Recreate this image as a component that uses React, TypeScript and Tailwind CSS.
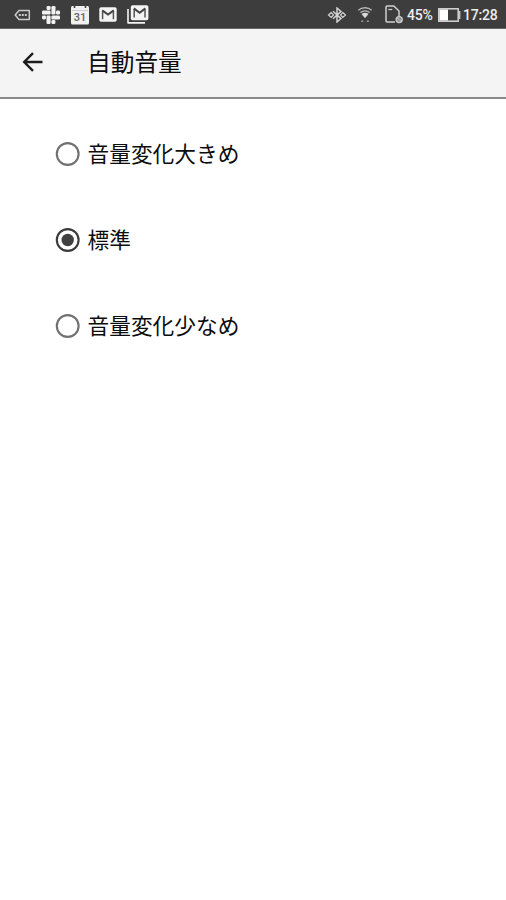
import { useState } from 'react';

const OPTIONS = [
  { id: 'large', label: '音量変化大きめ' },
  { id: 'standard', label: '標準' },
  { id: 'small', label: '音量変化少なめ' },
];

function MessageIcon() {
  return (
    <svg className="ml-[14px] h-3 w-[17px]" viewBox="0 0 17 12" fill="none" stroke="#c9c9c9" strokeWidth="1.5">
      <path d="M5 1.5h10.3v9H5L1.2 6z" strokeLinejoin="round" />
      <path d="M4.8 6h2M7.8 6h2M10.8 6h2" strokeWidth="2.2" />
    </svg>
  );
}

function SlackIcon() {
  return (
    <svg className="ml-[11px] h-[18px] w-[18px]" viewBox="0 0 18 18" fill="#f2f2f2">
      <rect x="4.6" y="0" width="4" height="4" rx="1.3" />
      <rect x="0" y="4.5" width="8.6" height="4.1" rx="1.3" />
      <rect x="9.4" y="0" width="4.1" height="8.6" rx="1.3" />
      <rect x="14" y="4.6" width="4" height="4" rx="1.3" />
      <rect x="9.4" y="9.4" width="8.6" height="4.1" rx="1.3" />
      <rect x="9.4" y="14" width="4" height="4" rx="1.3" />
      <rect x="4.5" y="9.4" width="4.1" height="8.6" rx="1.3" />
      <rect x="0" y="9.4" width="4" height="4" rx="1.3" />
    </svg>
  );
}

function CalendarIcon() {
  return (
    <svg className="ml-[11px] h-5 w-[18px]" viewBox="0 0 18 20">
      <rect x="0" y="1" width="18" height="18.5" rx="1.5" fill="#f1f1f1" />
      <path d="M3.5 0v3M14.5 0v3" stroke="#3d3d3d" strokeWidth="1.6" />
      <path d="M1 5.5h16" stroke="#c4c4c4" strokeWidth=".8" />
      <text x="9" y="15.7" textAnchor="middle" fontSize="11" fontWeight="500" fill="#666" fontFamily="Roboto, sans-serif">31</text>
    </svg>
  );
}

function MailIcon() {
  return (
    <svg className="ml-[10px] h-[15px] w-[18px]" viewBox="0 0 18 15">
      <rect x=".3" y=".3" width="17.4" height="14.4" rx="1.8" fill="#f4f4f4" />
      <path d="M3.6 12.2V4M14.4 12.2V4" stroke="#555" strokeWidth="1.5" />
      <path d="M3.2 3.4L9 7.6l5.8-4.2" fill="none" stroke="#444" strokeWidth="2" />
    </svg>
  );
}

function MailStackIcon() {
  return (
    <svg className="ml-[10px] h-[19px] w-[22px]" viewBox="0 0 22 19">
      <path d="M1 4v13.9h17" fill="none" stroke="#f4f4f4" strokeWidth="1.6" strokeLinejoin="round" />
      <rect x="3.8" y=".3" width="17.6" height="15" rx="1.8" fill="#f4f4f4" />
      <path d="M7.2 12.6V4M18 12.6V4" stroke="#555" strokeWidth="1.5" />
      <path d="M6.8 3.4l5.8 4.4 5.8-4.4" fill="none" stroke="#444" strokeWidth="2" />
    </svg>
  );
}

function BluetoothIcon() {
  return (
    <svg className="h-4 w-5" viewBox="0 0 20 16" fill="none" stroke="#d2d2d2" strokeWidth="1.5">
      <path d="M6 4.2l8 7.4-4 3.4V1l4 3.4-8 7.4" />
      <path d="M4.2 5.5L1.5 8l2.7 2.5L6.5 8zM15.8 5.5L18.5 8l-2.7 2.5L13.5 8z" strokeWidth="1.2" />
    </svg>
  );
}

function WifiIcon() {
  return (
    <svg className="ml-[10px] h-[17px] w-4" viewBox="0 0 16 17" fill="none" stroke="#b8b8b8" strokeWidth="1.3">
      <path d="M1.3 4.2C5 .9 11 .9 14.7 4.2M3.4 6.5c2.6-2.3 6.6-2.3 9.2 0" />
      <path d="M4.5 8.1c2-1.7 5-1.7 7 0L8 12.3z" fill="#d8d8d8" stroke="none" />
      <path d="M4.3 15.2h2M9.8 15.2h2" stroke="#999" strokeWidth="1.6" />
    </svg>
  );
}

function SimCardIcon() {
  return (
    <svg className="ml-[12px] h-[19px] w-[19px]" viewBox="0 0 19 19" fill="none" stroke="#cfcfcf" strokeWidth="1.5">
      <path d="M10 17H2.2Q1 17 1 15.8V2.2Q1 1 2.2 1h6.6L14 6v5" />
      <path d="M3.3 4.5h4" strokeWidth="1.2" />
      <circle cx="14.2" cy="14.6" r="3" fill="#888" strokeWidth="1.4" />
      <path d="M12.2 12.6l4 4" strokeWidth="1" />
    </svg>
  );
}

function BatteryIcon() {
  return (
    <svg className="ml-[3px] h-[14px] w-[23px]" viewBox="0 0 23 14">
      <rect x=".8" y=".8" width="19.4" height="12.4" fill="none" stroke="#d6d6d6" strokeWidth="1.5" />
      <rect x="1.5" y="1.5" width="8.5" height="11" fill="#fff" />
      <path d="M21.7 3v8" stroke="#c4c4c4" strokeWidth="1.4" />
    </svg>
  );
}

function StatusBar() {
  return (
    <div className="flex h-[29px] items-center justify-between border-b border-[#686868] bg-[#3d3d3d] pt-px font-[Roboto,sans-serif] text-[14px] text-[#ededed]">
      <div className="flex items-center">
        <MessageIcon />
        <SlackIcon />
        <CalendarIcon />
        <MailIcon />
        <MailStackIcon />
      </div>
      <div className="flex w-[179px] items-center whitespace-nowrap">
        <BluetoothIcon />
        <WifiIcon />
        <SimCardIcon />
        <span className="ml-[3px] w-[28px] pt-px text-[14px] font-medium tracking-[-0.2px]">45%</span>
        <BatteryIcon />
        <span className="ml-[2px] pt-px font-medium tracking-[-0.2px]">17:28</span>
      </div>
    </div>
  );
}

export default function App() {
  const [selected, setSelected] = useState('standard');

  return (
    <div className="min-h-screen bg-white font-['Noto_Sans_CJK_JP',sans-serif] text-[#0c0c0c]">
      <StatusBar />

      {/* Toolbar */}
      <header className="flex h-[70px] items-center border-b-2 border-[#8a8a8a] bg-[#f4f4f4] pl-[22px]">
        <button aria-label="戻る" className="mr-[43px]">
          <svg className="block h-[22px] w-[22px]" viewBox="0 0 22 22" fill="none" stroke="#1c1c1c" strokeWidth="2.4">
            <path d="M20.5 10H2.8M11 1.2L2.2 10l8.8 8.8" />
          </svg>
        </button>
        <h1 className="pb-[2px] text-[23.7px] leading-none">自動音量</h1>
      </header>

      {/* Options */}
      <div role="radiogroup" className="flex flex-col pt-[12px] pl-[55px]">
        {OPTIONS.map((o) => {
          const isSelected = o.id === selected;
          return (
            <button
              key={o.id}
              role="radio"
              aria-checked={isSelected}
              onClick={() => setSelected(o.id)}
              className="flex h-[86px] items-center gap-[7.5px] text-left"
            >
              <svg className="h-[25px] w-[25px]" viewBox="0 0 25 25">
                <circle cx="12.7" cy="12" r="10.9" fill="none" stroke={isSelected ? '#3a3a3a' : '#707070'} strokeWidth="2.1" />
                {isSelected && <circle cx="12.7" cy="12" r="6.2" fill="#404040" />}
              </svg>
              <span className="pb-[3px] text-[21.7px] leading-none">{o.label}</span>
            </button>
          );
        })}
      </div>
    </div>
  );
}
